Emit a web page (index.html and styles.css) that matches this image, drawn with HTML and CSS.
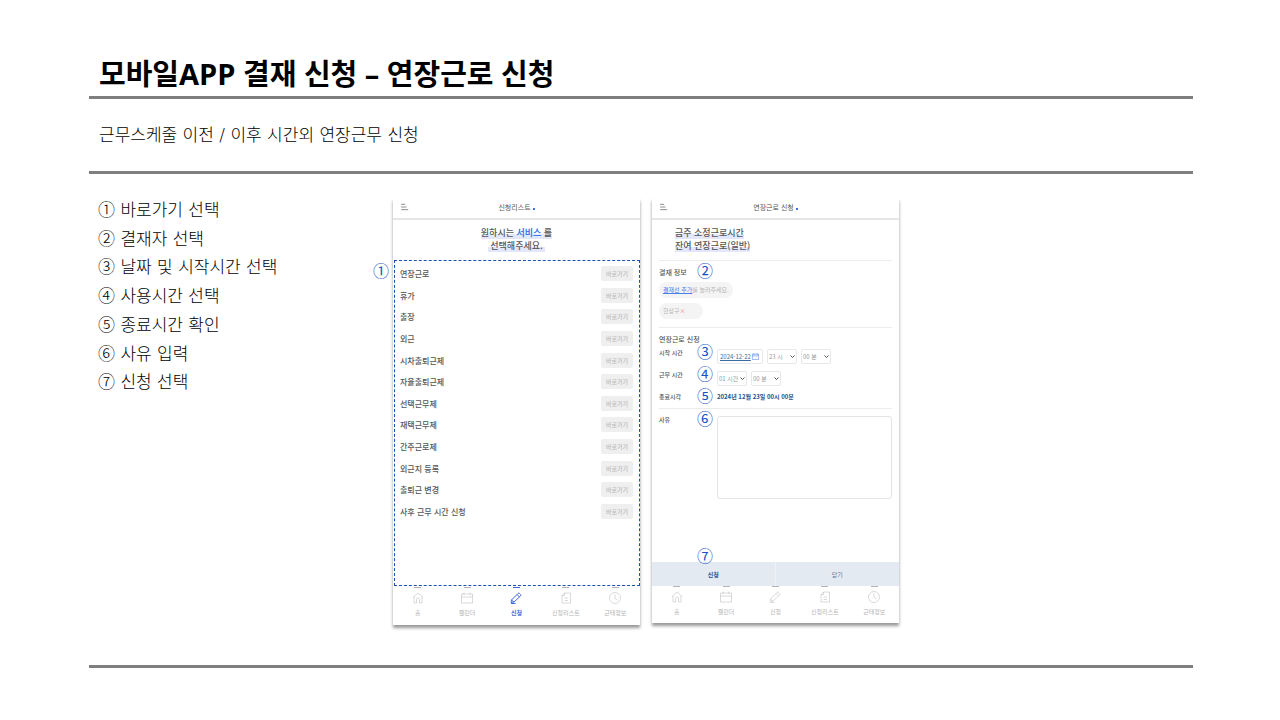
FILE: index.html
```html
<!DOCTYPE html>
<html lang="ko">
<head>
<meta charset="utf-8">
<meta name="viewport" content="width=device-width, initial-scale=1">
<title>모바일APP 결재 신청 – 연장근로 신청</title>
<link rel="stylesheet" href="styles.css">
</head>
<body>
<svg class="sprite" aria-hidden="true">
  <symbol id="home" viewBox="0 0 24 24"><path d="M2 11 12 2l10 9M4 9.500V22h5v-7a3 3 0 0 1 6 0v7h5V9.500"/></symbol>
  <symbol id="calendar" viewBox="0 0 24 24"><path d="M1 4h22v18H1zM1 10h22M6 1v5M18 1v5"/></symbol>
  <symbol id="pencil" viewBox="0 0 24 24"><path d="M3 16 16 3a2 2 0 0 1 3 0l2 2a2 2 0 0 1 0 3L8 20l-6 1zM14 5l5 5M3 16l5 4M2 23h9"/></symbol>
  <symbol id="document" viewBox="0 0 24 24"><path d="M9 2h12v20H4V7zM9 2v5H4M9 12h7M9 17h7"/></symbol>
  <symbol id="clock" viewBox="0 0 24 24"><circle cx="12" cy="12" r="11"/><path d="M12 5v8l5 3"/></symbol>
  <symbol id="menu" viewBox="0 0 24 24"><path d="M2 4h12M2 12h16M2 20h21"/></symbol>
  <symbol id="chevron" viewBox="0 0 10 10"><path d="m1 3 4 4 4-4"/></symbol>
</svg>
<div class="page">
  <header>
    <h1>모바일APP 결재 신청 – 연장근로 신청</h1>
    <hr class="rule">
    <p class="subtitle">근무스케줄 이전 / 이후 시간외 연장근무 신청</p>
    <hr class="rule">
  </header>
  <main class="content">
    <ul class="steps">
      <li>① 바로가기 선택</li>
      <li>② 결재자 선택</li>
      <li>③ 날짜 및 시작시간 선택</li>
      <li>④ 사용시간 선택</li>
      <li>⑤ 종료시간 확인</li>
      <li>⑥ 사유 입력</li>
      <li>⑦ 신청 선택</li>
    </ul>

    <section class="phone">
      <div class="topbar"><button class="menu" aria-label="메뉴"><svg><use href="#menu"/></svg></button><span>신청리스트<b class="dot"></b></span></div>
      <h2 class="intro"><span class="mark">원하시는 <strong>서비스</strong> 를</span><br><span class="mark">&nbsp;선택해주세요.&nbsp;</span></h2>
      <div class="outlined">
        <span class="note note-outside">①</span>
        <ul class="services">
          <li>연장근로<button>바로가기</button></li>
          <li>휴가<button>바로가기</button></li>
          <li>출장<button>바로가기</button></li>
          <li>외근<button>바로가기</button></li>
          <li>시차출퇴근제<button>바로가기</button></li>
          <li>자율출퇴근제<button>바로가기</button></li>
          <li>선택근무제<button>바로가기</button></li>
          <li>재택근무제<button>바로가기</button></li>
          <li>간주근로제<button>바로가기</button></li>
          <li>외근지 등록<button>바로가기</button></li>
          <li>출퇴근 변경<button>바로가기</button></li>
          <li>사후 근무 시간 신청<button>바로가기</button></li>
        </ul>
      </div>
      <nav class="tabs tall">
        <a href="#"><svg><use href="#home"/></svg>홈</a>
        <a href="#"><svg><use href="#calendar"/></svg>캘린더</a>
        <a href="#" class="active"><svg><use href="#pencil"/></svg>신청</a>
        <a href="#"><svg><use href="#document"/></svg>신청리스트</a>
        <a href="#"><svg><use href="#clock"/></svg>근태정보</a>
      </nav>
    </section>

    <section class="phone">
      <div class="topbar"><button class="menu" aria-label="메뉴"><svg><use href="#menu"/></svg></button><span>연장근로 신청<b class="dot"></b></span></div>
      <form class="request">
        <h2 class="intro left"><span class="mark">금주 소정근로시간</span><br><span class="mark">잔여 연장근로(일반)</span></h2>
        <div class="block approval">
          <h3>결재 정보</h3><span class="note">②</span>
          <p class="chip wide"><a href="#">결재선 추가</a>를 눌러주세요.</p>
          <p class="chip">한상구<button type="button" class="remove" aria-label="삭제">×</button></p>
        </div>
        <div class="block overtime">
          <h3>연장근로 신청</h3>
          <div class="field">
            <label for="date">시작 시간</label><span class="note">③</span>
            <span class="box date"><input id="date" type="text" value="2024-12-22"><svg><use href="#calendar"/></svg></span>
            <span class="box"><select aria-label="시작 시"><option>23 시</option></select><svg><use href="#chevron"/></svg></span>
            <span class="box"><select aria-label="시작 분"><option>00 분</option></select><svg><use href="#chevron"/></svg></span>
          </div>
          <div class="field">
            <label for="hours">근무 시간</label><span class="note">④</span>
            <span class="box"><select id="hours"><option>01 시간</option></select><svg><use href="#chevron"/></svg></span>
            <span class="box"><select aria-label="근무 분"><option>00 분</option></select><svg><use href="#chevron"/></svg></span>
          </div>
          <div class="field">
            <label for="end">종료시각</label><span class="note">⑤</span>
            <output id="end">2024년 12월 23일 00시 00분</output>
          </div>
        </div>
        <div class="block reason">
          <label for="reason">사유</label><span class="note">⑥</span>
          <textarea id="reason"></textarea>
        </div>
        <div class="actions">
          <span class="note note-above">⑦</span>
          <button type="button" class="submit">신청</button>
          <button type="button">닫기</button>
        </div>
      </form>
      <nav class="tabs">
        <a href="#"><svg><use href="#home"/></svg>홈</a>
        <a href="#"><svg><use href="#calendar"/></svg>캘린더</a>
        <a href="#"><svg><use href="#pencil"/></svg>신청</a>
        <a href="#"><svg><use href="#document"/></svg>신청리스트</a>
        <a href="#"><svg><use href="#clock"/></svg>근태정보</a>
      </nav>
    </section>
  </main>
  <hr class="rule">
</div>
</body>
</html>
```

FILE: styles.css
```css
* { box-sizing: border-box; }

body, h1, h2, h3, p, ul { margin: 0; padding: 0; }

body {
  background: #fff;
  color: #000;
  font-family: "DejaVu Sans", "Noto Sans CJK KR", sans-serif;
}

ul { list-style: none; }
a { color: inherit; text-decoration: none; }
button, input, select, textarea { font: inherit; color: inherit; margin: 0; padding: 0; border: 0; background: none; }
svg { fill: none; stroke: currentColor; stroke-width: 2; }
.sprite { display: none; }

.page {
  display: flex;
  flex-direction: column;
  min-height: 100vh;
  padding: 54px 87px 52px 89px;
}

h1 {
  padding: 0 0 2px 10px;
  font-family: "Open Sans", "Noto Sans CJK KR", sans-serif;
  font-size: 29px;
  line-height: 40px;
  font-weight: 700;
}
.rule { width: 100%; height: 3px; margin: 0; border: 0; background: #7f7f7f; }
.subtitle { padding-left: 10px; font-size: 17px; line-height: 72px; font-weight: 300; }

.content {
  flex: 1;
  display: grid;
  grid-template-columns: 292fr 247fr 247fr 282fr;
  column-gap: 12px;
  align-items: start;
  padding: 24px 0;
}

.steps {
  display: grid;
  grid-auto-rows: 1fr;
  height: 201px;
  margin-top: -2px;
  padding-left: 9px;
  font-size: 17px;
  line-height: 28px;
  font-weight: 300;
}

.phone {
  color: #555;
  font-family: "Noto Sans CJK KR", sans-serif;
  font-size: 8px;
  background: #fff;
  box-shadow: 0 3px 3px rgba(0, 0, 0, .4);
}

.topbar {
  position: relative;
  height: 22px;
  border-bottom: 2px solid #e6e6e6;
  text-align: center;
  font-size: 7px;
  line-height: 18px;
}
.menu { position: absolute; left: 7px; top: 5px; display: flex; color: #555; }
.menu svg { width: 9px; height: 8px; }
.dot { display: inline-block; width: 2px; height: 2px; margin-left: 2px; background: #3f6fe0; }

.intro { height: 40px; padding-top: 6px; text-align: center; font-size: 9px; line-height: 13px; font-weight: 500; }
.intro.left { padding-left: 23px; text-align: left; }
.intro strong { color: #3f78e8; font-weight: 700; }
.mark { background: linear-gradient(transparent 60%, #e2e7fb 60%); }

.note { position: absolute; color: #1c4fc4; font-size: 16px; line-height: 16px; font-weight: 400; }

.outlined { position: relative; height: 326px; margin: 0 0 0 1px; padding: 2px 6px 0 5px; border: 1px dashed #1c4fb4; }
.note-outside { left: -22px; top: 1px; }
.services { display: grid; grid-auto-rows: 1fr; height: 259px; }
.services li { display: flex; align-items: center; justify-content: space-between; font-weight: 500; }
.services button { width: 32px; height: 15px; border-radius: 2px; background: #efefef; color: #bbb; font-size: 6px; line-height: 15px; }

.tabs { display: grid; grid-template-columns: repeat(5, 1fr); height: 37px; color: #b4b4b4; font-size: 6px; line-height: 10px; }
.tabs.tall { height: 39px; }
.tabs a { display: flex; flex-direction: column; align-items: center; gap: 4px; }
.tabs a::before { content: ""; width: 7px; height: 1px; background: currentColor; }
.tabs svg { width: 12px; height: 12px; stroke-width: 1px; }
.tabs.tall a { padding-top: 1px; }
.tabs .active { color: #4169e1; font-weight: 700; }
.tabs .active svg { stroke-width: 2px; }

.block { position: relative; margin: 0 7px; border-top: 1px solid #ececec; }
.block h3 { font-size: 7px; line-height: 10px; font-weight: 500; }
.block .note { left: 38px; top: 1px; }

.approval { height: 67px; padding-top: 6px; }
.chip { width: 44px; height: 16px; margin-top: 5px; padding-left: 4px; border-radius: 8px; background: #f4f4f4; color: #b4b4b4; font-size: 6px; line-height: 16px; }
.chip.wide { width: 74px; }
.chip a { color: #4a7fe8; text-decoration: underline; }
.remove { color: #e88; }

.overtime { height: 81px; padding-top: 6px; }
.field { position: relative; display: flex; align-items: start; gap: 4px; height: 22px; padding-top: 5px; font-size: 6px; line-height: 10px; }
.field label { width: 54px; margin-top: -1px; font-weight: 500; }
.overtime .note { top: -1px; }
.field output { margin-top: -1px; color: #28508c; font-weight: 700; }

.box { display: flex; align-items: center; width: 30px; height: 15px; padding: 0 1px; border: 1px solid #e8e8e8; border-radius: 2px; color: #999; }
.box select { flex: 1; width: 0; appearance: none; outline: 0; }
.box svg { flex: none; width: 5px; height: 5px; color: #555; }
.box.date { width: 46px; padding: 0 3px 0 2px; }
.date input { flex: 1; width: 0; color: #3d6b9c; text-decoration: underline; }
.box.date svg { width: 7px; height: 7px; color: #4a7fe8; }

.reason { display: flex; height: 154px; padding-top: 7px; font-size: 6px; line-height: 10px; font-weight: 500; }
.reason label { width: 58px; margin-top: -1px; }
.reason textarea { flex: 1; height: 83px; border: 1px solid #e4e4e4; border-radius: 3px; resize: none; }

.actions { position: relative; display: grid; grid-template-columns: 1fr 1fr; height: 24px; background: #e4eaf2; color: #5c7896; font-size: 6px; }
.actions .submit { border-right: 1px solid #eef2f7; color: #28508c; font-weight: 700; }
.note-above { left: 45px; top: -15px; }
```
